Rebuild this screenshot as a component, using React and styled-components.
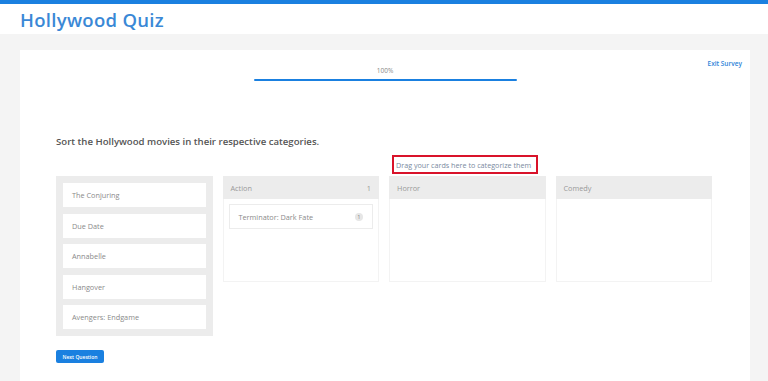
import styled, { createGlobalStyle } from "styled-components";

const GlobalStyle = createGlobalStyle`
  html, body {
    margin: 0;
    padding: 0;
    background: #f4f4f4;
    font-family: "Open Sans", "Noto Sans", sans-serif;
  }
`;

const Page = styled.div`
  width: 768px;
  height: 381px;
  overflow: hidden;
  background: #f4f4f4;
  border-top: 4px solid #1a80e0;
  box-sizing: border-box;
`;

const Header = styled.header`
  height: 30px;
  background: #fff;
  display: flex;
  align-items: center;
  padding-left: 20px;
  margin-bottom: 16px;
`;

const Title = styled.h1`
  margin: 0;
  font-size: 18.5px;
  font-weight: 600;
  letter-spacing: 0.3px;
  color: #3a88d6;
`;

const Card = styled.main`
  margin: 0 18px 0 20px;
  background: #fff;
  height: 400px;
  padding: 0 38px 0 36px;
  box-sizing: border-box;
  position: relative;
`;

const ExitLink = styled.a`
  position: absolute;
  right: 8px;
  top: 9px;
  font-size: 6.5px;
  font-weight: 600;
  color: #2c83d8;
`;

const Progress = styled.div`
  display: flex;
  flex-direction: column;
  align-items: center;
  padding-top: 17px;
  margin-left: -36px;
  margin-right: -38px;
`;

const ProgressLabel = styled.span`
  font-size: 6.5px;
  color: #888;
  line-height: 8px;
`;

const ProgressBar = styled.div`
  width: 263px;
  height: 2px;
  margin-top: 4px;
  background: #1a80e0;
  border-radius: 1px;
`;

const Question = styled.h2`
  margin: 54px 0 0;
  font-size: 9.6px;
  font-weight: 600;
  color: #555;
  line-height: 14px;
`;

const Grid = styled.div`
  display: grid;
  grid-template-columns: repeat(4, 1fr);
  column-gap: 10px;
`;

const HintRow = styled(Grid)`
  margin-top: 6px;
  height: 20px;
`;

const Hint = styled.div`
  grid-column: 3;
  margin-left: 3px;
  width: 146px;
  height: 19px;
  box-sizing: border-box;
  border: 2px solid #d9132a;
  font-size: 7.2px;
  color: #7a8aa0;
  display: flex;
  align-items: center;
  padding-left: 2px;
  white-space: nowrap;
`;

const Board = styled(Grid)`
  margin-top: 1px;
  align-items: start;
`;

const Pool = styled.div`
  background: #ececec;
  padding: 7px 7px 7px;
  display: flex;
  flex-direction: column;
  gap: 6.5px;
`;

const Item = styled.div`
  background: #fff;
  height: ${(p) => (p.$small ? "25px" : "24px")};
  display: flex;
  align-items: center;
  justify-content: space-between;
  padding: 0 9px;
  font-size: 7.3px;
  color: #8a8a8a;
  border: ${(p) => (p.$bordered ? "1px solid #ececec" : "none")};
  box-sizing: border-box;
`;

const Bucket = styled.div`
  display: flex;
  flex-direction: column;
`;

const BucketHead = styled.div`
  background: #ececec;
  height: 23px;
  display: flex;
  align-items: center;
  justify-content: space-between;
  padding: 0 8px;
  font-size: 7.3px;
  color: #999;
`;

const BucketBody = styled.div`
  height: 83px;
  border: 1px solid #f3f3f3;
  border-top: none;
  padding: 5px 5px;
  box-sizing: border-box;
`;

const Badge = styled.span`
  width: 8px;
  height: 8px;
  border-radius: 50%;
  background: #e6e6e6;
  font-size: 5px;
  color: #777;
  display: flex;
  align-items: center;
  justify-content: center;
`;

const NextButton = styled.button`
  margin-top: 14px;
  width: 48px;
  height: 13px;
  padding: 0;
  border: none;
  border-radius: 2px;
  background: #1a80e0;
  color: #fff;
  font-family: inherit;
  font-size: 5px;
  font-weight: 600;
`;

const pool = ["The Conjuring", "Due Date", "Annabelle", "Hangover", "Avengers: Endgame"];

const buckets = [
  { name: "Action", count: "1", items: ["Terminator: Dark Fate"] },
  { name: "Horror", items: [] },
  { name: "Comedy", items: [] },
];

export default function App() {
  return (
    <>
      <GlobalStyle />
      <Page>
        <Header>
          <Title>Hollywood Quiz</Title>
        </Header>
        <Card>
          <ExitLink>Exit Survey</ExitLink>
          <Progress>
            <ProgressLabel>100%</ProgressLabel>
            <ProgressBar />
          </Progress>
          <Question>Sort the Hollywood movies in their respective categories.</Question>
          <HintRow>
            <Hint>Drag your cards here to categorize them</Hint>
          </HintRow>
          <Board>
            <Pool>
              {pool.map((m) => (
                <Item key={m}>{m}</Item>
              ))}
            </Pool>
            {buckets.map((b) => (
              <Bucket key={b.name}>
                <BucketHead>
                  <span>{b.name}</span>
                  {b.count && <span>{b.count}</span>}
                </BucketHead>
                <BucketBody>
                  {b.items.map((i) => (
                    <Item key={i} $bordered $small>
                      {i}
                      <Badge>1</Badge>
                    </Item>
                  ))}
                </BucketBody>
              </Bucket>
            ))}
          </Board>
          <NextButton>Next Question</NextButton>
        </Card>
      </Page>
    </>
  );
}
